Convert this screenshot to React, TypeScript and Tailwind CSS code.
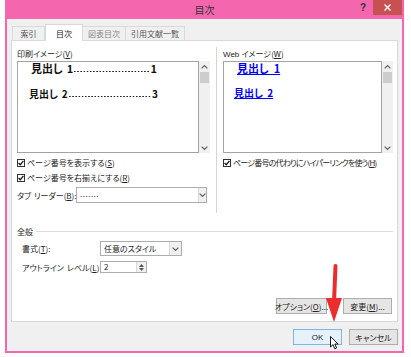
import React from "react";

const jp = "font-['Noto_Sans_CJK_JP','Noto_Sans',sans-serif] [font-feature-settings:'palt']";

function Chevron({ up = false }: { up?: boolean }) {
  return (
    <svg width="7" height="4" viewBox="0 0 7 4" className={up ? "rotate-180" : ""}>
      <path d="M0.6 0.6 L3.5 3.4 L6.4 0.6" fill="none" stroke="#606060" strokeWidth="1.2" />
    </svg>
  );
}

function ScrollBar() {
  return (
    <div className="w-[11px] shrink-0 flex flex-col items-center bg-[#f0f0f0]">
      <div className="h-[11px] flex items-center justify-center">
        <Chevron up />
      </div>
      <div className="w-[9px] h-[11px] bg-[#cdcdcd]" />
      <div className="flex-1" />
      <div className="h-[11px] flex items-center justify-center">
        <Chevron />
      </div>
    </div>
  );
}

function Mn({ pre, k, post = "" }: { pre: React.ReactNode; k: string; post?: string }) {
  return (
    <span className="whitespace-nowrap">
      {pre}(<span className="underline">{k}</span>){post}
    </span>
  );
}

function CheckRow({ pre, k, tight = false }: { pre: string; k: string; tight?: boolean }) {
  return (
    <div className={"h-[15px] flex items-center gap-[2px]" + (tight ? " tracking-[-0.8px]" : "")}>
      <div className="w-[8px] h-[8px] border border-[#333] bg-white flex items-center justify-center">
        <svg width="6" height="6" viewBox="0 0 6 6">
          <path d="M0.6 3 L2.3 4.8 L5.4 0.8" fill="none" stroke="#111" strokeWidth="1.3" />
        </svg>
      </div>
      <Mn pre={pre} k={k} />
    </div>
  );
}

function Btn({ children, w, focus = false }: { children: React.ReactNode; w: string; focus?: boolean }) {
  return (
    <div
      className={
        "h-[16px] flex items-center justify-center border " +
        w +
        (focus ? " border-[#7eb4ea] bg-[#e5f1fb]" : " border-[#adadad] bg-[#e5e5e5]")
      }
    >
      {children}
    </div>
  );
}

// print-preview line: heading, dot leader, page number
function Leader({ num, n, cls }: { num: string; n: string; cls: string }) {
  return (
    <div className={"flex items-end leading-[13px] " + cls}>
      <span className="whitespace-nowrap shrink-0">見出し</span>
      <span className="ml-[4px] shrink-0">{n}</span>
      <div className="flex-1 min-w-0 h-[1.5px] mb-[3px] mx-[1px] [background-image:linear-gradient(to_right,#222_1.5px,transparent_1.5px)] [background-size:3.2px_1.5px] bg-repeat-x" />
      <span className="shrink-0">{num}</span>
    </div>
  );
}

export default function App() {
  return (
    <div className={"relative w-[411px] h-[357px] bg-white text-[8px] leading-[13px] text-[#222] " + jp}>
      <div className="ml-[5px] w-[399px] h-[353px] border-x-2 border-b-2 border-[#f466ae] bg-[#f0f0f0] flex flex-col">
        {/* title bar */}
        <div className="h-[19px] bg-[#f466ae] grid grid-cols-[1fr_auto_1fr]">
          <div />
          <div className="text-[10px] leading-[19px] text-[#333]">目次</div>
          <div className="flex justify-end items-start">
            <div className="mt-[2px] mr-[7px] text-[10px] leading-[12px] font-bold text-[#333] font-['Liberation_Sans',sans-serif]">?</div>
            <div className="w-[29px] h-[15px] bg-[#c75050] flex items-center justify-center">
              <svg width="7" height="7" viewBox="0 0 7 7">
                <path d="M0.5 0.5 L6.5 6.5 M6.5 0.5 L0.5 6.5" stroke="#fff" strokeWidth="1.4" />
              </svg>
            </div>
          </div>
        </div>

        {/* tabs */}
        <div className="mt-[5px] pl-[5px] h-[16px] flex items-end">
          <div className="w-[33px] h-[14px] border border-b-0 border-[#d9d9d9] bg-[#f0f0f0] flex items-center justify-center text-[#555]">索引</div>
          <div className="relative z-10 -mb-px w-[38px] h-[17px] border border-b-0 border-[#d9d9d9] bg-white flex items-center justify-center">目次</div>
          <div className="w-[43px] h-[14px] border border-l-0 border-b-0 border-[#d9d9d9] bg-[#f0f0f0] flex items-center justify-center text-[#888]">図表目次</div>
          <div className="w-[59px] h-[14px] border border-l-0 border-b-0 border-[#d9d9d9] bg-[#f0f0f0] flex items-center justify-center text-[#555]">引用文献一覧</div>
        </div>

        {/* panel */}
        <div className="mx-[4px] h-[282px] bg-white border border-[#d9d9d9] flex flex-col">
          <div className="pl-[5px] pt-[6px] flex">
            {/* left column */}
            <div className="w-[193px] shrink-0 flex flex-col">
              <div className="h-[13px]">
                <Mn pre="印刷イメージ" k="V" />
              </div>
              <div className="mt-[1px] h-[92px] flex">
                <div className="flex-1 min-w-0 overflow-hidden border border-[#a3a3a3] bg-white font-bold text-[#111]">
                  <Leader n="1" num="1" cls="text-[11px] pl-[13px] pr-[41px]" />
                  <div className="h-[12px]" />
                  <Leader n="2" num="3" cls="text-[10px] pl-[11px] pr-[40px]" />
                </div>
                <ScrollBar />
              </div>
              <div className="mt-[2px]">
                <CheckRow pre="ページ番号を表示する" k="S" />
                <CheckRow pre="ページ番号を右揃えにする" k="R" />
              </div>
              <div className="mt-[2px] h-[16px] flex items-center">
                <div className="w-[59px] shrink-0">
                  <Mn
                    pre={
                      <>
                        タブ<span className="ml-[3px]">リーダー</span>
                      </>
                    }
                    k="B"
                    post=":"
                  />
                </div>
                <div className="w-[131px] h-[16px] border border-[#abadb3] bg-white flex">
                  <div className="flex-1 pl-[3px] leading-[12px] tracking-[0.5px]">.......</div>
                  <div className="w-[8px] border-l border-[#d9d9d9] bg-[#f0f0f0] flex items-center justify-center">
                    <Chevron />
                  </div>
                </div>
              </div>
            </div>

            {/* separator */}
            <div className="ml-[6px] w-px h-[166px] shrink-0 bg-[#d5d5d5]" />

            {/* right column */}
            <div className="ml-[6px] w-[170px] shrink-0 flex flex-col">
              <div className="h-[13px]">
                <span className="font-['Liberation_Sans',sans-serif]">Web </span>
                <Mn pre="イメージ" k="W" />
              </div>
              <div className="mt-[1px] h-[92px] flex">
                <div className="flex-1 min-w-0 border border-[#a3a3a3] bg-white font-bold text-[#0000ff]">
                  <div className="pl-[13px] text-[11px] leading-[13px]">
                    <span className="underline whitespace-pre">見出し  1</span>
                  </div>
                  <div className="mt-[11px] pl-[10px] text-[10px] leading-[13px]">
                    <span className="underline whitespace-pre">見出し  2</span>
                  </div>
                </div>
                <ScrollBar />
              </div>
              <div className="mt-[2px]">
                <CheckRow pre="ページ番号の代わりにハイパーリンクを使う" k="H" tight />
              </div>
            </div>
          </div>

          {/* general */}
          <div className="mt-[11px] pl-[5px] pr-[4px] h-[14px] flex items-center">
            <span>全般</span>
            <div className="ml-[3px] flex-1 h-px bg-[#dcdcdc]" />
          </div>
          <div className="mt-[3px] pl-[10px] h-[15px] flex items-center">
            <div className="w-[78px]">
              <Mn pre="書式" k="T" post=":" />
            </div>
            <div className="w-[82px] h-[15px] border border-[#abadb3] bg-white flex">
              <div className="flex-1 pl-[3px] leading-[13px]">任意のスタイル</div>
              <div className="w-[12px] border-l border-[#d9d9d9] bg-[#f0f0f0] flex items-center justify-center">
                <Chevron />
              </div>
            </div>
          </div>
          <div className="mt-[5px] pl-[10px] h-[12px] flex items-center">
            <div className="w-[78px]">
              <Mn
                pre={
                  <>
                    アウトライン<span className="ml-[3px]">レベル</span>
                  </>
                }
                k="L"
                post=":"
              />
            </div>
            <div className="w-[47px] h-[12px] border border-[#abadb3] bg-white flex">
              <div className="flex-1 pl-[3px] leading-[10px]">2</div>
              <div className="w-[10px] border-l border-[#d9d9d9] bg-[#f0f0f0] flex flex-col items-center justify-center gap-[1px]">
                <svg width="5" height="3" viewBox="0 0 5 3"><path d="M0 3 L2.5 0 L5 3 Z" fill="#555" /></svg>
                <svg width="5" height="3" viewBox="0 0 5 3"><path d="M0 0 L2.5 3 L5 0 Z" fill="#555" /></svg>
              </div>
            </div>
          </div>

          <div className="mt-auto mb-[7px] pr-[5px] flex justify-end gap-[16px]">
            <Btn w="w-[51px]">
              <Mn pre="オプション" k="O" post="..." />
            </Btn>
            <Btn w="w-[49px]">
              <Mn pre="変更" k="M" post="..." />
            </Btn>
          </div>
        </div>

        {/* bottom buttons */}
        <div className="mt-[7px] pr-[4px] flex justify-end gap-[7px]">
          <Btn w="w-[49px]" focus>
            <span className="font-['Liberation_Sans',sans-serif]">OK</span>
          </Btn>
          <Btn w="w-[49px]">キャンセル</Btn>
        </div>
      </div>

      {/* red arrow overlay */}
      <svg className="absolute left-[322px] top-[264px]" width="24" height="62" viewBox="0 0 24 62">
        <path d="M13.5 2 L12 38" stroke="#ec2d2d" strokeWidth="4" strokeLinecap="round" />
        <path d="M4 34 L20 34 L12 58 Z" fill="#ec2d2d" />
      </svg>

      {/* mouse cursor */}
      <svg className="absolute left-[330px] top-[336px]" width="10" height="14" viewBox="0 0 10 14">
        <path d="M0.5 0.5 L0.5 11 L3 8.6 L4.8 12.8 L6.6 12 L4.8 8 L8.2 8 Z" fill="#fff" stroke="#000" strokeWidth="0.9" strokeLinejoin="round" />
      </svg>
    </div>
  );
}
